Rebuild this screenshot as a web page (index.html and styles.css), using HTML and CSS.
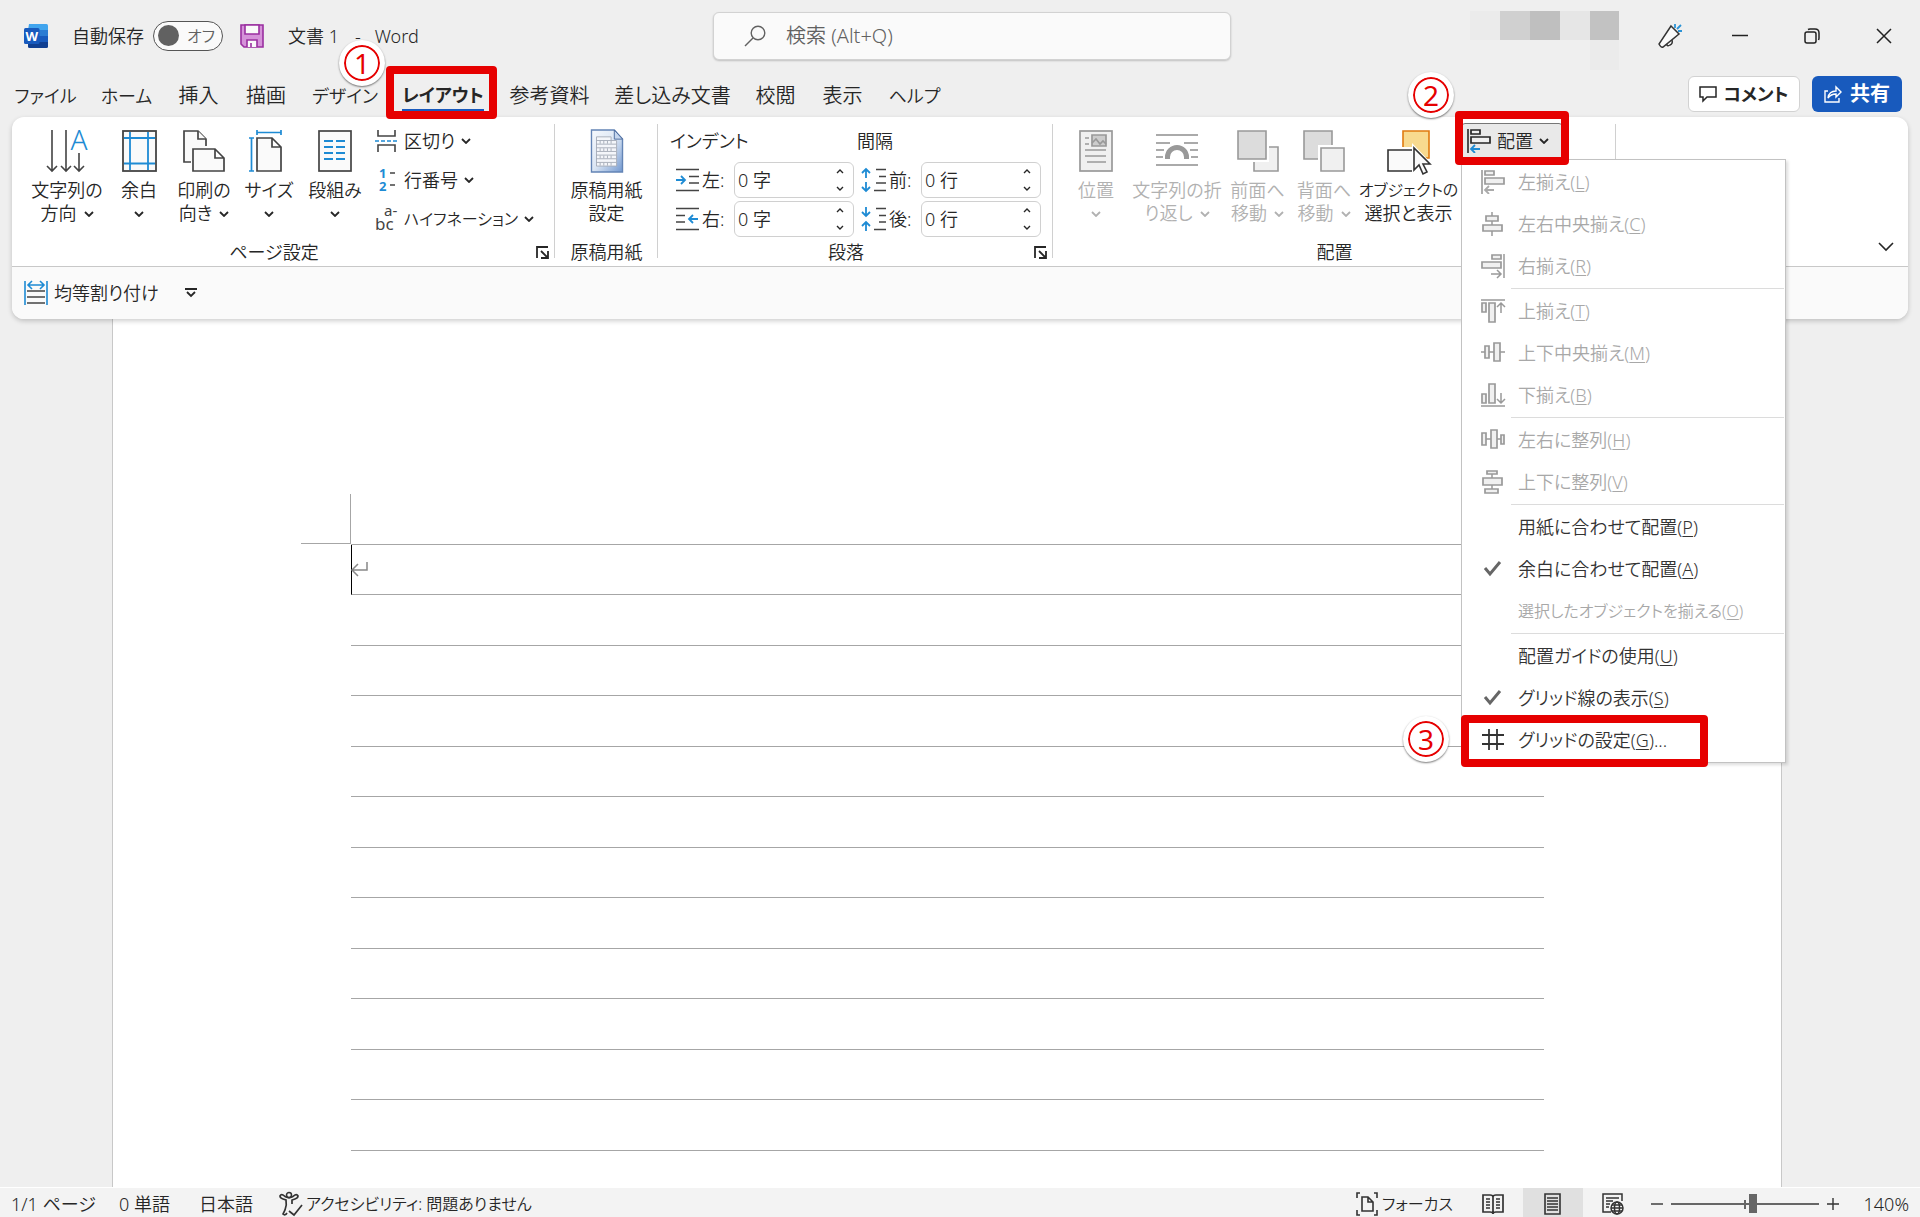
FILE: index.html
```html
<!DOCTYPE html>
<html lang="ja">
<head>
<meta charset="utf-8">
<meta name="viewport" content="width=device-width, initial-scale=1">
<title>文書 1 - Word</title>
<link rel="stylesheet" href="styles.css">
</head>
<body>
<svg class="sprite" aria-hidden="true">
  <symbol id="chev" viewBox="0 0 10 6"><path d="M1 1l4 4 4-4" fill="none" stroke="currentColor" stroke-width="1.8"/></symbol>
  <symbol id="chev-up" viewBox="0 0 8 5"><path d="M1 4l3-3 3 3" fill="none" stroke="currentColor" stroke-width="1.4"/></symbol>
  <symbol id="launch" viewBox="0 0 13 13"><path d="M1 12V1h11M12 5v7H5M5 5l6 6" fill="none" stroke="currentColor" stroke-width="1.8"/></symbol>
  <symbol id="check" viewBox="0 0 24 24"><path d="M4 11l5 6L19 5" fill="none" stroke="currentColor" stroke-width="3"/></symbol>
  <symbol id="al-left" viewBox="0 0 24 24"><path d="M1 0v24" fill="none" stroke="currentColor" stroke-width="1.6"/><path d="M4 1h9v4H4zM4 8h19v6H4z" class="box"/><path class="arrow" d="M13 20H4m4-4l-4 4 4 4"/></symbol>
</svg>

<header class="titlebar">
  <div class="title-left">
    <svg class="ic24" viewBox="0 0 24 24" aria-label="Word"><path fill="#41a5ee" d="M5 0h17.500q1.500 0 1.500 1.500V6H4z"/><path fill="#2b7cd3" d="M4 6h20v6H4z"/><path fill="#185abd" d="M4 12h20v6H4z"/><path fill="#103f91" d="M4 18h20v4.500q0 1.500-1.500 1.500h-17Q4 24 4 22.500z"/><rect y="4" width="15.500" height="16" rx="1.500" fill="#185abd"/><text x="7.800" y="16.500" text-anchor="middle" fill="#fff" font-size="13" font-weight="700">W</text></svg>
    <label class="autosave"><span>自動保存</span><span class="toggle"><input type="checkbox" role="switch"><span class="toggle-text">オフ</span></span></label>
    <button class="plain save" aria-label="保存"><svg class="ic24" viewBox="0 0 24 24"><path d="M1 1h22v22H4l-3-3z" fill="#d592d9" stroke="#9a2fa0" stroke-width="1.600"/><path d="M5 1h14v9H5zM7 23v-7h10v7" fill="#fafafa" stroke="#9a2fa0" stroke-width="1.600"/><path d="M11 23v-4" stroke="#9a2fa0" stroke-width="1.600"/></svg></button>
    <span class="doc-name">文書 1</span><span class="dash">-</span><span>Word</span>
  </div>
  <label class="search">
    <svg viewBox="0 0 22 22"><circle cx="14" cy="8" r="6.800"/><path d="M9 13l-8 8"/></svg>
    <input type="text" aria-label="検索" placeholder="検索 (Alt+Q)">
  </label>
  <div class="title-right">
    <div class="account" aria-hidden="true"><i></i><i></i><i></i><i></i><i></i><i></i></div>
    <button class="plain" aria-label="新機能"><svg class="ic24" viewBox="0 0 24 24" fill="#fafafa" stroke="#333" stroke-width="1.500"><path d="M8 19q1 4 4 2 3-1 2-5"/><path d="M13 2l8 8L5 23q-2 1-4-3z"/><path d="M17 4V0M19 5l4-4M20 7h4" stroke="#2b93d6" stroke-width="1.800"/></svg></button>
    <button class="plain" aria-label="最小化"><svg class="ic16" viewBox="0 0 16 16"><path d="M0 7.500h16"/></svg></button>
    <button class="plain" aria-label="元に戻す"><svg class="ic16" viewBox="0 0 16 16"><rect x="1" y="4" width="11" height="11" rx="2"/><path d="M4 1.500Q5 1 6 1h5q4 0 4 4v5q0 1-.5 2"/></svg></button>
    <button class="plain" aria-label="閉じる"><svg class="ic16" viewBox="0 0 16 16"><path d="M1 1l14 14M15 1L1 15"/></svg></button>
  </div>
</header>

<nav class="tabrow">
  <div class="tabs" role="tablist">
    <button role="tab" class="kana">ファイル</button><button role="tab" class="kana">ホーム</button><button role="tab">挿入</button><button role="tab">描画</button><button role="tab" class="kana">デザイン</button>
    <div class="tab-active kana"><button role="tab" aria-selected="true"><span>レイアウト</span></button><span class="frame frame-tab"></span><span class="badge badge-tab">1</span></div>
    <button role="tab">参考資料</button><button role="tab">差し込み文書</button><button role="tab">校閲</button><button role="tab">表示</button><button role="tab" class="kana">ヘルプ</button>
  </div>
  <div class="tab-actions">
    <button class="comment kana"><svg viewBox="0 0 18 18"><path d="M1 2h16v10H8l-4 4v-4H1z" fill="none" stroke="currentColor" stroke-width="1.500"/></svg>コメント</button>
    <button class="share"><svg viewBox="0 0 18 18"><path d="M4 6H1v11h14v-4M4 13q1-7 8-7V2l5 5-5 5V9q-5 0-8 4z" fill="none" stroke="currentColor" stroke-width="1.400"/></svg>共有</button>
  </div>
</nav>

<section class="ribbon">
  <div class="groups">
    <div class="group g-page">
      <div class="body">
        <button class="big"><svg viewBox="0 0 42 42"><path d="M6 0v41M1 36l5 5 5-5M20 0v41M15 36l5 5 5-5M33 23v18M28 36l5 5 5-5" fill="none" stroke="#444" stroke-width="1.600"/><text x="33" y="20" text-anchor="middle" font-size="28" fill="#1e8bd4">A</text></svg><span>文字列の</span><span>方向<svg class="chev"><use href="#chev"/></svg></span></button>
        <button class="big"><svg viewBox="0 0 42 42"><rect x="5" y="1" width="33" height="40" fill="#fafafa" stroke="#444" stroke-width="1.800"/><path d="M12 2v38M30 2v38M6 8h31M6 33.500h31" fill="none" stroke="#1e8bd4" stroke-width="1.800"/></svg><span>余白</span><span><svg class="chev"><use href="#chev"/></svg></span></button>
        <button class="big"><svg viewBox="0 0 42 42" fill="#fafafa" stroke="#444" stroke-width="1.700"><path d="M8 32H1V1h14l8 8v7"/><path d="M15 1v8h8M10 19h22l9 9v13H10zM32 19v9h9"/></svg><span>印刷の</span><span>向き<svg class="chev"><use href="#chev"/></svg></span></button>
        <button class="big"><svg viewBox="0 0 42 42" fill="#fafafa" stroke="#444" stroke-width="1.700"><path d="M9 8h15l9 9v24H9zM24 8v9h9"/><path d="M3.500 8v33M1 8h5M1 41h5M9 2.500h24M9 0v5M33 0v5" stroke="#1e8bd4"/></svg><span>サイズ</span><span><svg class="chev"><use href="#chev"/></svg></span></button>
        <button class="big"><svg viewBox="0 0 42 42"><rect x="5" y="1" width="32" height="40" fill="#fafafa" stroke="#444" stroke-width="1.700"/><path d="M10 11h9M10 17h9M10 23h9M10 29h9M22 11h9M22 17h9M22 23h9M22 29h9" stroke="#1e8bd4" stroke-width="1.800"/></svg><span>段組み</span><span><svg class="chev"><use href="#chev"/></svg></span></button>
        <div class="smalls">
          <button class="small"><svg class="ic24" viewBox="0 0 24 24" fill="none" stroke="#444" stroke-width="1.600"><path d="M4 1v6h17V1M4 23v-7h17v7"/><path d="M1 12h23" stroke="#1e8bd4" stroke-dasharray="4 2"/></svg>区切り<svg class="chev"><use href="#chev"/></svg></button>
          <button class="small"><svg class="ic24" viewBox="0 0 24 24"><text x="5" y="10" font-size="13" font-weight="700" fill="#1e8bd4">1</text><text x="5" y="23" font-size="13" font-weight="700" fill="#1e8bd4">2</text><path d="M16 5h5M16 17h5" stroke="#444" stroke-width="1.600"/></svg>行番号<svg class="chev"><use href="#chev"/></svg></button>
          <button class="small kana-s"><svg class="ic24" viewBox="0 0 24 24" fill="#444" font-weight="400"><text x="10" y="9" font-size="15">a-</text><text x="1" y="23" font-size="17">bc</text></svg>ハイフネーション<svg class="chev"><use href="#chev"/></svg></button>
        </div>
      </div>
      <div class="caption"><span>ページ設定</span><button class="plain" aria-label="ページ設定の詳細"><svg class="launch"><use href="#launch"/></svg></button></div>
    </div>

    <div class="group g-paper">
      <div class="body">
        <button class="big"><svg viewBox="0 0 42 46"><defs><linearGradient id="pg" x1="0" y1="0" x2="1" y2="1"><stop offset="0" stop-color="#f6f9fd"/><stop offset=".5" stop-color="#dbe6f4"/><stop offset="1" stop-color="#7298d0"/></linearGradient></defs><path d="M4 0h25l9 10v36H4z" fill="url(#pg)" stroke="#6384b5" stroke-width="1.500"/><path d="M29 0v10h9z" fill="#c6d7ee" stroke="#47679a"/><path d="M9.500 7.500h16v4h6v28h-22z" fill="#f4f6fa" stroke="#a5abb8"/><path d="M9 11.500h17M9 15.500h22M9 19.500h22M9 23.500h22M9 27.500h22M9 31.500h22M9 35.500h22M13.500 12v3M17.500 12v3M21.500 12v3M25.500 12v3M13.500 20v3M17.500 20v3M21.500 20v3M25.500 20v3M13.500 28v3M17.500 28v3M21.500 28v3M25.500 28v3M13.500 36v3M17.500 36v3M21.500 36v3M25.500 36v3" fill="none" stroke="#a5abb8"/></svg><span>原稿用紙</span><span>設定</span></button>
      </div>
      <div class="caption caption-full"><span>原稿用紙</span></div>
    </div>

    <div class="group g-para">
      <div class="body fields">
        <span class="head">インデント</span><span class="head">間隔</span>
        <label class="field"><svg viewBox="0 0 24 24"><path d="M1 1.500h23M14 8.500h10M14 15h10M1 22.500h23" stroke="#444" stroke-width="1.700"/><path class="blue" d="M1 12h9m-4-4l4 4-4 4"/></svg><span>左:</span><span class="spin"><input type="text" value="0 字"><span class="ud"><svg><use href="#chev-up"/></svg><svg class="down"><use href="#chev-up"/></svg></span></span></label>
        <label class="field"><svg viewBox="0 0 24 24"><path d="M14 1.500h10M17 8.500h7M14 15h10M12 22.500h12" stroke="#444" stroke-width="1.700"/><path class="blue" d="M4 10V1M0 5l4-4 4 4M4 14v9M0 19l4 4 4-4"/></svg><span>前:</span><span class="spin"><input type="text" value="0 行"><span class="ud"><svg><use href="#chev-up"/></svg><svg class="down"><use href="#chev-up"/></svg></span></span></label>
        <label class="field"><svg viewBox="0 0 24 24"><path d="M1 1.500h23M1 8.500h9M1 15h9M1 22.500h23" stroke="#444" stroke-width="1.700"/><path class="blue" d="M23 12h-9m4-4l-4 4 4 4"/></svg><span>右:</span><span class="spin"><input type="text" value="0 字"><span class="ud"><svg><use href="#chev-up"/></svg><svg class="down"><use href="#chev-up"/></svg></span></span></label>
        <label class="field"><svg viewBox="0 0 24 24"><path d="M14 1.500h10M17 8.500h7M17 15h7M12 22.500h12" stroke="#444" stroke-width="1.700"/><path class="blue" d="M4 0v9M0 5l4 4 4-4M4 24v-9M0 19l4-4 4 4"/></svg><span>後:</span><span class="spin"><input type="text" value="0 行"><span class="ud"><svg><use href="#chev-up"/></svg><svg class="down"><use href="#chev-up"/></svg></span></span></label>
      </div>
      <div class="caption"><span>段落</span><button class="plain" aria-label="段落の詳細"><svg class="launch"><use href="#launch"/></svg></button></div>
    </div>

    <div class="group g-arr">
      <div class="body">
        <button class="big" disabled><svg viewBox="0 0 42 42" fill="#f0f0f0" stroke="#999" stroke-width="1.700"><rect x="5" y="1" width="32" height="40"/><path d="M10 8h4M10 14h4M10 20h21M10 26h21M12 32h19"/><path d="M17 5h14v11H17z" fill="#ccc"/><path d="M17 13l4-4 4 5 3-3 3 3" fill="none"/></svg><span>位置</span><span><svg class="chev"><use href="#chev"/></svg></span></button>
        <button class="big" disabled><svg viewBox="0 0 42 42" fill="none" stroke="#aaa" stroke-width="1.800"><path d="M0 5h42M0 13h14M28 13h14M0 20h8M34 20h8M0 27h7M35 27h7M0 35h42"/><path d="M11.500 29v-2a9.500 9.500 0 0 1 19 0v2" stroke="#999" stroke-width="5"/></svg><span>文字列の折</span><span>り返し<svg class="chev"><use href="#chev"/></svg></span></button>
        <button class="big" disabled><svg viewBox="0 0 42 42" stroke="#999" stroke-width="1.600"><path d="M17 17h24v24H17z" fill="#f0f0f0"/><path d="M0 0h32v32H0z" stroke="none" fill="#fff"/><path d="M1 1h28v28H1z" fill="#dcdcdc"/></svg><span>前面へ</span><span>移動<svg class="chev"><use href="#chev"/></svg></span></button>
        <button class="big" disabled><svg viewBox="0 0 42 42" stroke="#999" stroke-width="1.600"><path d="M1 1h28v28H1z" fill="#dcdcdc"/><path d="M15 15h27v27H15z" stroke="none" fill="#fff"/><path d="M18 18h23v23H18z" fill="#f0f0f0"/></svg><span>背面へ</span><span>移動<svg class="chev"><use href="#chev"/></svg></span></button>
        <button class="big"><svg viewBox="0 0 42 42" stroke-width="1.600"><path d="M15 1h26v27H15z" fill="#f8da8f" stroke="#e07b10"/><path d="M-2 17h27v27H-2z" fill="#fff"/><path d="M0 20h25v21H0z" fill="#fafafa" stroke="#333"/><path d="M24 13v30l5-1 3 4 8-3 5-8z" fill="#fff"/><path d="M26 18v22l5-5 4 9 4-2-4-8h7z" fill="#fafafa" stroke="#333"/></svg><span class="kana-s">オブジェクトの</span><span>選択と表示</span></button>
        <div class="align">
          <button class="align-btn" aria-haspopup="menu" aria-expanded="true"><svg class="ic24"><use href="#al-left"/></svg>配置<svg class="chev"><use href="#chev"/></svg></button>
          <div class="menu" role="menu">
            <button role="menuitem" disabled><svg><use href="#al-left"/></svg><span>左揃え(<u>L</u>)</span></button>
            <button role="menuitem" disabled><svg viewBox="0 0 24 24"><path d="M11 0v24"/><path class="box" d="M5 4h12v5H5zM2 13h19v6H2z"/></svg><span>左右中央揃え(<u>C</u>)</span></button>
            <button role="menuitem" disabled><svg viewBox="0 0 24 24"><path d="M23 0v24"/><path class="box" d="M11 1h9v4h-9zM1 8h19v6H1z"/><path d="M10 20h10m-4-4l4 4-4 4"/></svg><span>右揃え(<u>R</u>)</span></button>
            <hr>
            <button role="menuitem" disabled><svg viewBox="0 0 24 24"><path d="M0 1h24"/><path class="box" d="M1 4h4v9H1zM8 4h6v19H8z"/><path d="M20 14V4m-4 4l4-4 4 4"/></svg><span>上揃え(<u>T</u>)</span></button>
            <button role="menuitem" disabled><svg viewBox="0 0 24 24"><path d="M0 11h24"/><path class="box" d="M4 5h4v12H4zM13 2h6v18h-6z"/></svg><span>上下中央揃え(<u>M</u>)</span></button>
            <button role="menuitem" disabled><svg viewBox="0 0 24 24"><path d="M0 23h24"/><path class="box" d="M1 11h4v9H1zM8 1h6v19H8z"/><path d="M20 10v10m-4-4l4 4 4-4"/></svg><span>下揃え(<u>B</u>)</span></button>
            <hr>
            <button role="menuitem" disabled><svg viewBox="0 0 24 24"><path d="M5 11h15"/><path class="box" d="M1 5h4v12H1zM10 2h6v18h-6zM20 7h3v9h-3z"/></svg><span>左右に整列(<u>H</u>)</span></button>
            <button role="menuitem" disabled><svg viewBox="0 0 24 24"><path d="M11 4v15"/><path class="box" d="M6 1h10v3H6zM2 8h19v7H2zM4 19h13v4H4z"/></svg><span>上下に整列(<u>V</u>)</span></button>
            <hr>
            <button role="menuitem"><i></i><span>用紙に合わせて配置(<u>P</u>)</span></button>
            <button role="menuitem"><svg class="ck"><use href="#check"/></svg><span>余白に合わせて配置(<u>A</u>)</span></button>
            <button role="menuitem" class="kana-s" disabled><i></i><span>選択したオブジェクトを揃える(<u>O</u>)</span></button>
            <hr>
            <button role="menuitem"><i></i><span>配置ガイドの使用(<u>U</u>)</span></button>
            <button role="menuitem"><svg class="ck"><use href="#check"/></svg><span>グリッド線の表示(<u>S</u>)</span></button>
            <div class="menu-marked"><button role="menuitem"><svg viewBox="0 0 24 24" class="grid-ic"><path d="M8 1v21M16 1v21M1 7h22M1 16h22"/></svg><span>グリッドの設定(<u>G</u>)...</span></button><span class="frame frame-item"></span><span class="badge badge-item">3</span></div>
          </div>
          <span class="frame frame-align"></span><span class="badge badge-align">2</span>
        </div>
      </div>
      <div class="caption caption-full"><span>配置</span></div>
    </div>
    <button class="plain collapse" aria-label="リボンを折りたたむ"><svg viewBox="0 0 16 9"><path d="M1 1l7 7 7-7" fill="none" stroke="currentColor" stroke-width="1.600"/></svg></button>
  </div>
  <div class="quick">
    <button class="plain dist"><svg class="ic24" viewBox="0 0 24 24"><path d="M3 10h18M3 16h18M3 22h18" stroke="#444" stroke-width="1.600"/><path d="M1 0v24M23 0v24M4 4h16M8 0L4 4l4 4M16 0l4 4-4 4" fill="none" stroke="#1e8bd4" stroke-width="1.600"/></svg>均等割り付け</button>
    <button class="plain" aria-label="クイック アクセス ツール バーのカスタマイズ"><svg class="custom" viewBox="0 0 12 10"><path d="M0 1h12M2 4l4 4 4-4" fill="none" stroke="currentColor" stroke-width="1.800"/></svg></button>
  </div>
</section>

<main class="canvas">
  <article class="page">
    <div class="corner"></div>
    <div class="lines">
      <p><svg viewBox="0 0 18 16"><path d="M15 0v8H0M6 2L0 8l6 6" fill="none" stroke="#888" stroke-width="1.500"/></svg></p>
      <p></p><p></p><p></p><p></p><p></p><p></p><p></p><p></p><p></p><p></p><p></p>
    </div>
  </article>
</main>

<footer class="status">
  <span class="st-page">1/1 ページ</span><span class="st-words">0 単語</span><span class="st-lang">日本語</span>
  <button class="plain access kana-s"><svg viewBox="0 0 24 24"><path d="M10 6q-4-1-6-3Q2 2 1 4q0 2 3 3l3 1q1 5-1 10l-2 4q2 2 4-1M10 6q4-1 6-3 2-1 3 1 0 2-3 3l-3 1v4M10 19l5 4 8-10" fill="none" stroke="#333" stroke-width="1.700"/><circle cx="10" cy="3" r="2.500" fill="none" stroke="#333" stroke-width="1.500"/></svg>アクセシビリティ: 問題ありません</button>
  <div class="st-right">
    <button class="plain focus kana-s"><svg viewBox="0 0 22 24" fill="none" stroke="#333" stroke-width="1.600"><path d="M4 1H1v5M1 18v5h3M18 1h3v5M21 18v5h-3M6 5h6l5 5v9H6zM12 5v5h5"/></svg>フォーカス</button>
    <button class="view" aria-label="閲覧モード"><svg viewBox="0 0 22 22" fill="none" stroke="#333" stroke-width="1.700"><path d="M1 2h7q3 0 3 2 0-2 3-2h7v17h-7q-3 0-3 2 0-2-3-2H1zM11 4v17M4 6h4M4 9h4M4 12h4M4 15h4M14 6h4M14 9h4M14 12h4M14 15h4"/></svg></button>
    <button class="view view-on" aria-label="印刷レイアウト"><svg viewBox="0 0 22 22" fill="none" stroke="#333" stroke-width="1.600"><path d="M3 1h15v20H3zM5 5h11M5 8h11M5 11h11M5 14h11M5 17h11"/></svg></button>
    <button class="view" aria-label="Web レイアウト"><svg viewBox="0 0 22 22" fill="none" stroke="#333" stroke-width="1.500"><path d="M9 19H1V1h19v7M4 5h13M4 8h7M4 11h4M4 14h3"/><circle cx="15" cy="15" r="6"/><ellipse cx="15" cy="15" rx="2.500" ry="6"/><path d="M9 15h12M10 12h10M10 18h10"/></svg></button>
    <button class="plain zoom" aria-label="縮小"><svg viewBox="0 0 12 12"><path d="M0 6h12"/></svg></button>
    <input class="slider" type="range" min="0" max="100" value="56" aria-label="ズーム">
    <button class="plain zoom" aria-label="拡大"><svg viewBox="0 0 12 12"><path d="M0 6h12M6 0v12"/></svg></button>
    <span class="pct">140%</span>
  </div>
</footer>
</body>
</html>
```
FILE: styles.css
```css
* { box-sizing: border-box; }

body {
  margin: 0;
  min-height: 100vh;
  display: flex;
  flex-direction: column;
  background: #efefef;
  color: #262626;
  font: 350 18px/24px "Noto Sans", "Noto Sans CJK JP", sans-serif;
  font-feature-settings: "palt";
  overflow-x: hidden;
}

button, input {
  margin: 0;
  padding: 0;
  font: inherit;
  font-feature-settings: inherit;
  color: inherit;
}

button { border: 0; background: none; white-space: nowrap; }
svg { flex: none; overflow: visible; }
.sprite { position: absolute; width: 0; height: 0; }
.plain { display: flex; align-items: center; }
.ic24 { width: 24px; height: 24px; }
.ic16 { width: 16px; height: 16px; fill: none; stroke: #222; stroke-width: 1.5px; }
.chev { width: 10px; height: 6px; }
.blue, .arrow { fill: none; stroke: var(--arrow, #1e8bd4); stroke-width: 1.8px; }
.box { fill: #f0f0f0; stroke: currentColor; stroke-width: 1.7px; }

/* Labels made mostly of katakana are set one size down */
.kana { font-size: 18px; }
.kana-s { font-size: 16px; }

/* Title bar */
.titlebar {
  height: 72px;
  padding-left: 24px;
  display: grid;
  grid-template-columns: 1fr 518px 1fr;
}
.title-left { display: flex; align-items: center; height: 72px; }
.autosave { display: flex; align-items: center; gap: 9px; margin-left: 24px; }
.toggle { position: relative; display: flex; }
.toggle input {
  appearance: none;
  width: 70px;
  height: 30px;
  border: 1px solid #555;
  border-radius: 15px;
  background: #fafafa;
}
.toggle input::before {
  content: "";
  display: block;
  width: 21px;
  height: 21px;
  margin: 3px 4px;
  border-radius: 50%;
  background: #616161;
}
.toggle-text { position: absolute; left: 34px; top: 3px; color: #616161; font-size: 16px; }
.save { margin: 0 24px 0 17px; }
.dash { margin: 0 14px 0 16px; }

.search {
  display: flex;
  align-items: center;
  gap: 20px;
  height: 48px;
  margin-top: 12px;
  padding-left: 30px;
  border: 1px solid #d2d2d2;
  border-radius: 6px;
  background: #fafafa;
  box-shadow: 0 1px 2px #0003;
}
.search svg { width: 22px; height: 22px; fill: none; stroke: #616161; stroke-width: 1.4px; }
.search input { flex: 1; min-width: 0; border: 0; outline: 0; background: none; font-size: 20px; }
.search input::placeholder { color: #616161; opacity: 1; }

.title-right { display: flex; justify-content: flex-end; height: 72px; padding-right: 28px; }
.title-right .plain { margin-left: 56px; height: 72px; }
.title-right .account + .plain { margin-left: 39px; }
.title-right .account + .plain + .plain { margin-left: 50px; }
.account { display: grid; grid-template-columns: repeat(5, 30px); grid-template-rows: 29px 30px; margin-top: 11px; width: 149px; overflow: hidden; }
.account i { background: #ebebeb; }
.account i:nth-child(2) { background: #d0d0d0; }
.account i:nth-child(3) { background: #bfbfbf; }
.account i:nth-child(4) { background: #e6e6e6; }
.account i:nth-child(5) { background: #c2c2c2; }
.account i:nth-child(6) { grid-column: 5; }

/* Tabs */
.tabrow { display: flex; justify-content: space-between; height: 45px; padding: 0 18px 0 3px; }
.tabs {
  display: grid;
  grid-template-columns: 85px 77px 67px 68px 90px 106px 107px 139px 67px 67px 77px;
  font-size: 20px;
}
.tabs button { display: flex; justify-content: center; align-items: center; padding-top: 2px; }
.tab-active { position: relative; z-index: 3; display: grid; font-weight: 700; }
.tabs .tab-active button { padding-top: 0; }
.tab-active button span { line-height: 28px; padding-top: 4px; border-bottom: 3px solid #185abd; }
.tab-actions { display: flex; gap: 12px; padding-top: 4px; font-size: 20px; font-weight: 700; }
.tab-actions button { display: flex; align-items: center; justify-content: center; height: 36px; border-radius: 6px; }
.tab-actions svg { width: 18px; height: 18px; }
.comment { width: 112px; gap: 6px; border: 1px solid #d2d2d2; background: #fff; }
.share { width: 90px; gap: 8px; background: #185abd; color: #fff; }

/* Ribbon */
.ribbon {
  position: relative;
  z-index: 2;
  margin: 0 12px;
  border-radius: 12px;
  background: #fff;
  box-shadow: 0 2px 5px #0003;
}
.groups { display: flex; height: 150px; padding-top: 6px; border-bottom: 1px solid #c8c8c8; }
.group {
  display: flex;
  flex-direction: column;
  background: linear-gradient(#d0d0d0, #d0d0d0) right 1px / 1px 134px no-repeat;
}
.g-page { width: 543px; }
.g-paper { width: 103px; }
.g-para { width: 395px; }
.g-arr { width: 563px; }
.body { display: grid; height: 117px; }
.g-page .body { grid-template-columns: 86px 58px 72px 58px 74px auto; padding-left: 12px; justify-content: start; }
.g-arr .body { grid-template-columns: 70px 92px 69px 64px 105px 102px; padding-left: 8px; }
.caption { display: grid; grid-template-columns: 1fr 19px; text-align: center; }
.caption-full { grid-template-columns: 1fr; }
.launch { width: 13px; height: 13px; }

.big { display: flex; flex-direction: column; align-items: center; padding-top: 7px; line-height: 23px; }
.big > svg { width: 42px; height: 42px; margin-bottom: 7px; }
.big span { display: flex; align-items: center; justify-content: center; gap: 7px; height: 23px; }
.big:disabled { color: #b1b1b1; }

.smalls { display: grid; grid-template-rows: repeat(3, 36px); row-gap: 3px; padding-left: 2px; }
.small { display: flex; align-items: center; gap: 6px; }

.fields { grid-template-columns: 187px 187px; grid-template-rows: repeat(3, 36px); row-gap: 3px; padding-left: 12px; }
.head { line-height: 36px; }
.field { display: grid; grid-template-columns: 24px 29px 120px; column-gap: 3px; align-items: center; padding-left: 5px; }
.field svg { width: 24px; height: 24px; }
.spin {
  display: flex;
  align-items: center;
  height: 36px;
  padding: 0 9px 0 3px;
  border: 1px solid #d0d0d0;
  border-radius: 6px;
}
.spin input { flex: 1; min-width: 0; border: 0; outline: 0; background: none; }
.ud { display: grid; gap: 12px; }
.spin .ud svg { width: 8px; height: 5px; }
.ud .down { transform: rotate(180deg); }

.collapse { margin: auto 14px 15px auto; }
.collapse svg { width: 16px; height: 9px; }

.quick { display: flex; align-items: center; gap: 26px; height: 52px; padding: 0 12px; border-radius: 0 0 12px 12px; background: #fafafa; }
.dist { gap: 6px; }
.custom { width: 12px; height: 10px; }

/* Align drop-down */
.align { position: relative; }
.align-btn {
  display: flex;
  align-items: center;
  gap: 6px;
  width: 102px;
  height: 36px;
  padding-left: 5px;
  border: 1px solid #777;
  border-radius: 4px;
  background: #e9e9e9;
}
.menu {
  position: absolute;
  top: 36px;
  left: 0;
  width: 325px;
  padding: 1px 0;
  border: 1px solid #c2c2c2;
  background: #fff;
  box-shadow: 2px 2px 3px #0002;
}
.menu button { display: grid; grid-template-columns: 24px 1fr; column-gap: 13px; align-items: center; width: 100%; height: 42px; padding-left: 19px; text-align: left; color: #333; }
.menu button:disabled { color: #a8a8a8; }
.menu svg { --arrow: #aaa; width: 24px; height: 24px; color: #999; fill: none; stroke: #999; stroke-width: 1.5px; }
.menu .ck { color: #666; stroke: none; }
.menu .grid-ic { stroke: #333; stroke-width: 1.8px; }
.menu u { text-underline-offset: 2px; }
.menu hr { height: 1px; margin: 1px 1px 1px 49px; border: 0; background: #dcdcdc; }
.menu-marked { position: relative; }

/* Step call-outs */
.frame { position: absolute; border: 8px solid #e60000; border-radius: 4px; pointer-events: none; }
.frame-tab { inset: -6px -1px -2px -4px; }
.frame-align { inset: -12px -6px auto -6px; height: 54px; }
.frame-item { inset: -4px auto -6px -1px; width: 247px; }
.badge {
  position: absolute;
  width: 46px;
  height: 46px;
  border: 5px solid #fff;
  border-radius: 50%;
  background: #fff;
  box-shadow: inset 0 0 0 2px #e60000, 0 1px 2px #0008;
  color: #e60000;
  font-size: 28px;
  font-weight: 400;
  line-height: 36px;
  text-align: center;
}
.badge-tab { left: -51px; top: -32px; }
.badge-align { left: -53px; top: -51px; }
.badge-item { left: -59px; top: -3px; }

/* Document */
.canvas { flex: 1; display: flex; border-bottom: 1px solid #fff; }
.page { flex: 1; margin: 0 138px 0 112px; padding: 175px 237px 36px; border: solid #c8c8c8; border-width: 0 1px; background: #fff; }
.corner { width: 50px; height: 50px; margin-left: -49px; border: solid #a6a6a6; border-width: 0 1px 1px 0; }
.lines { border-top: 1px solid #a6a6a6; margin-left: 1px; }
.lines p { height: 50px; margin: 0; border-bottom: 1px solid #a6a6a6; }
.lines p:nth-child(even) { height: 51px; }
.lines p:first-child { padding-top: 17px; border-left: 1px solid #000; }
.lines svg { display: block; width: 18px; height: 16px; }

/* Status bar */
.status { display: flex; align-items: center; height: 29px; padding: 2px 11px 0; background: #f3f3f3; }
.st-page { width: 108px; }
.st-words { width: 80px; }
.st-lang { width: 80px; }
.access svg { width: 24px; height: 24px; margin-right: 3px; }
.status .plain { height: 24px; }
.st-right { display: flex; align-items: center; margin-left: auto; }
.focus { gap: 4px; width: 107px; }
.focus svg { width: 22px; height: 24px; }
.view { display: grid; place-items: center; width: 60px; height: 29px; margin-top: -2px; padding-top: 2px; }
.view-on { background: #e0e0e0; }
.view svg { width: 22px; height: 22px; }
.zoom svg { width: 12px; height: 12px; stroke: #333; stroke-width: 1.4px; }
.view + .zoom { margin-left: 8px; }
.slider {
  appearance: none;
  width: 148px;
  height: 20px;
  margin: 0 8px;
  background:
    linear-gradient(#666, #666) 73px 6px / 2px 9px no-repeat,
    linear-gradient(#666, #666) 0 9px / 148px 2px no-repeat;
}
.slider::-webkit-slider-thumb { appearance: none; width: 8px; height: 19px; background: #666; }
.slider::-moz-range-thumb { width: 8px; height: 19px; border: 0; border-radius: 0; background: #666; }
.pct { width: 52px; margin-left: 18px; text-align: right; }
```
